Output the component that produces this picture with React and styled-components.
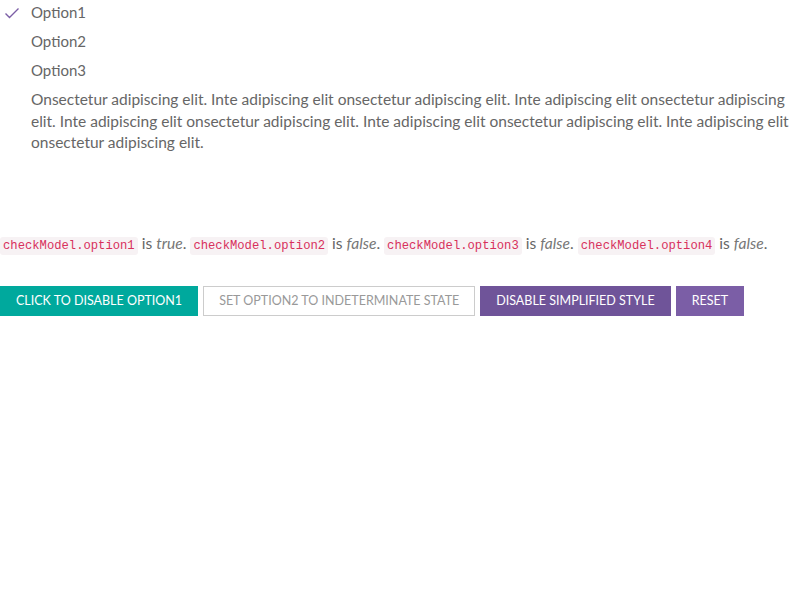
import React, {useState} from 'react';
import styled, {createGlobalStyle} from 'styled-components';

const GlobalStyle = createGlobalStyle`
    body {
        margin: 0;
        background: #fff;
        font-family: Lato, "Liberation Sans", sans-serif;
        color: #666;
    }
`

const Page = styled.div`
    width: 800px;
`

const OptionList = styled.ul`
    list-style: none;
    margin: 0;
    padding: 0 10px 0 0;
`

const OptionRow = styled.li`
    display: flex;
    align-items: flex-start;
    padding: 2px 0 6px;
    font-size: ${p => p.$long ? '15.5px' : '15px'};
    line-height: ${p => p.$long ? '21.5px' : '21px'};
    color: #666;
`

const CheckBox = styled.span`
    flex: 0 0 31px;
    height: 21px;
    display: flex;
    align-items: center;
    padding-left: 4px;
    box-sizing: border-box;
`

const Label = styled.span`
    flex: 1;
`

const Status = styled.p`
    margin: 72px 0 0;
    font-size: 15.6px;
    line-height: 22px;
    color: #666;

    em {
        color: #777;
    }
`

const Code = styled.code`
    font-family: "Liberation Mono", monospace;
    font-size: 12.2px;
    color: #d8305c;
    background: #f7f2f4;
    border-radius: 3px;
    padding: 2px 3px;
`

const ButtonBar = styled.div`
    display: flex;
    gap: 5px;
    margin-top: 29px;
`

const Button = styled.button`
    height: 30px;
    padding: 0 15px;
    border: 1px solid ${p => p.$border || p.$bg};
    background: ${p => p.$bg};
    color: ${p => p.$color || '#fff'};
    font-family: Lato, "Liberation Sans", sans-serif;
    font-size: 12.5px;
    text-transform: uppercase;
    cursor: pointer;
    border-radius: 0;

    &:focus {
        outline: none;
    }
`

function Check() {
    return (
        <svg width="16" height="12" viewBox="0 0 16 12" fill="none">
            <path d="M1.5 6.5 L5.5 10.5 L14.5 1.5" stroke="#7b5ea6" strokeWidth="1.4" />
        </svg>
    )
}

export default function App() {

    const [model] = useState({option1: true, option2: false, option3: false, option4: false});

    const options = [
        {key: 'option1', label: 'Option1'},
        {key: 'option2', label: 'Option2'},
        {key: 'option3', label: 'Option3'},
        {key: 'option4', long: true, label: 'Onsectetur adipiscing elit. Inte adipiscing elit onsectetur adipiscing elit. Inte adipiscing elit onsectetur adipiscing elit. Inte adipiscing elit onsectetur adipiscing elit. Inte adipiscing elit onsectetur adipiscing elit. Inte adipiscing elit onsectetur adipiscing elit.'},
    ];

    return (
        <Page>
            <GlobalStyle />
            <OptionList>
                {options.map(o => (
                    <OptionRow key={o.key} $long={o.long}>
                        <CheckBox>{model[o.key] && <Check />}</CheckBox>
                        <Label>{o.label}</Label>
                    </OptionRow>
                ))}
            </OptionList>

            <Status>
                {options.map((o, i) => (
                    <React.Fragment key={o.key}>
                        <Code>checkModel.{o.key}</Code> is <em>{String(model[o.key])}</em>.{i < 3 ? ' ' : ''}
                    </React.Fragment>
                ))}
            </Status>

            <ButtonBar>
                <Button $bg="#00a99d">Click to disable Option1</Button>
                <Button $bg="#fff" $border="#ccc" $color="#999">Set Option2 to indeterminate state</Button>
                <Button $bg="#6f5499">Disable simplified style</Button>
                <Button $bg="#7b5ea6">Reset</Button>
            </ButtonBar>
        </Page>
    )
}
